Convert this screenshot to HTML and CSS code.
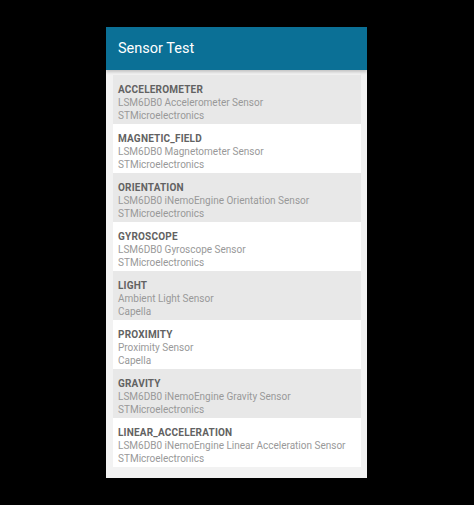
FILE: index.html
```html
<!DOCTYPE html>
<html>
<head>
<meta charset="utf-8">
<link rel="stylesheet" href="styles.css">
</head>
<body>
<div class="screen">
  <header class="appbar">Sensor Test</header>
  <ul class="list">
    <li class="item alt"><div class="name">ACCELEROMETER</div><div class="sub">LSM6DB0 Accelerometer Sensor</div><div class="sub">STMicroelectronics</div></li>
    <li class="item"><div class="name">MAGNETIC_FIELD</div><div class="sub">LSM6DB0 Magnetometer Sensor</div><div class="sub">STMicroelectronics</div></li>
    <li class="item alt"><div class="name">ORIENTATION</div><div class="sub">LSM6DB0 iNemoEngine Orientation Sensor</div><div class="sub">STMicroelectronics</div></li>
    <li class="item"><div class="name">GYROSCOPE</div><div class="sub">LSM6DB0 Gyroscope Sensor</div><div class="sub">STMicroelectronics</div></li>
    <li class="item alt"><div class="name">LIGHT</div><div class="sub">Ambient Light Sensor</div><div class="sub">Capella</div></li>
    <li class="item"><div class="name">PROXIMITY</div><div class="sub">Proximity Sensor</div><div class="sub">Capella</div></li>
    <li class="item alt"><div class="name">GRAVITY</div><div class="sub">LSM6DB0 iNemoEngine Gravity Sensor</div><div class="sub">STMicroelectronics</div></li>
    <li class="item"><div class="name">LINEAR_ACCELERATION</div><div class="sub">LSM6DB0 iNemoEngine Linear Acceleration Sensor</div><div class="sub">STMicroelectronics</div></li>
  </ul>
</div>
</body>
</html>
```
FILE: styles.css
```css
html, body {
  margin: 0;
  padding: 0;
  background: #000;
}
body {
  padding: 27px 0 0 106px;
  font-family: Roboto, "Liberation Sans", sans-serif;
}
.screen {
  width: 261px;
  height: 451px;
  background: #f2f2f2;
  display: flex;
  flex-direction: column;
}
.appbar {
  height: 43px;
  background: #0b7096;
  color: #fff;
  font-size: 14.5px;
  display: flex;
  align-items: center;
  padding-left: 12px;
  box-shadow: 0 2px 3px rgba(0,0,0,0.2);
  position: relative;
  z-index: 1;
}
.list {
  list-style: none;
  margin: 5px 6px 0 7px;
  padding: 0;
}
.item {
  background: #fff;
  height: 49px;
  box-sizing: border-box;
  padding: 8px 0 0 5px;
  line-height: 13px;
}
.item.alt {
  background: #e8e8e8;
}
.name {
  font-size: 10px;
  font-weight: bold;
  color: #626262;
  letter-spacing: 0.2px;
}
.sub {
  font-size: 10px;
  color: #999;
}
```
